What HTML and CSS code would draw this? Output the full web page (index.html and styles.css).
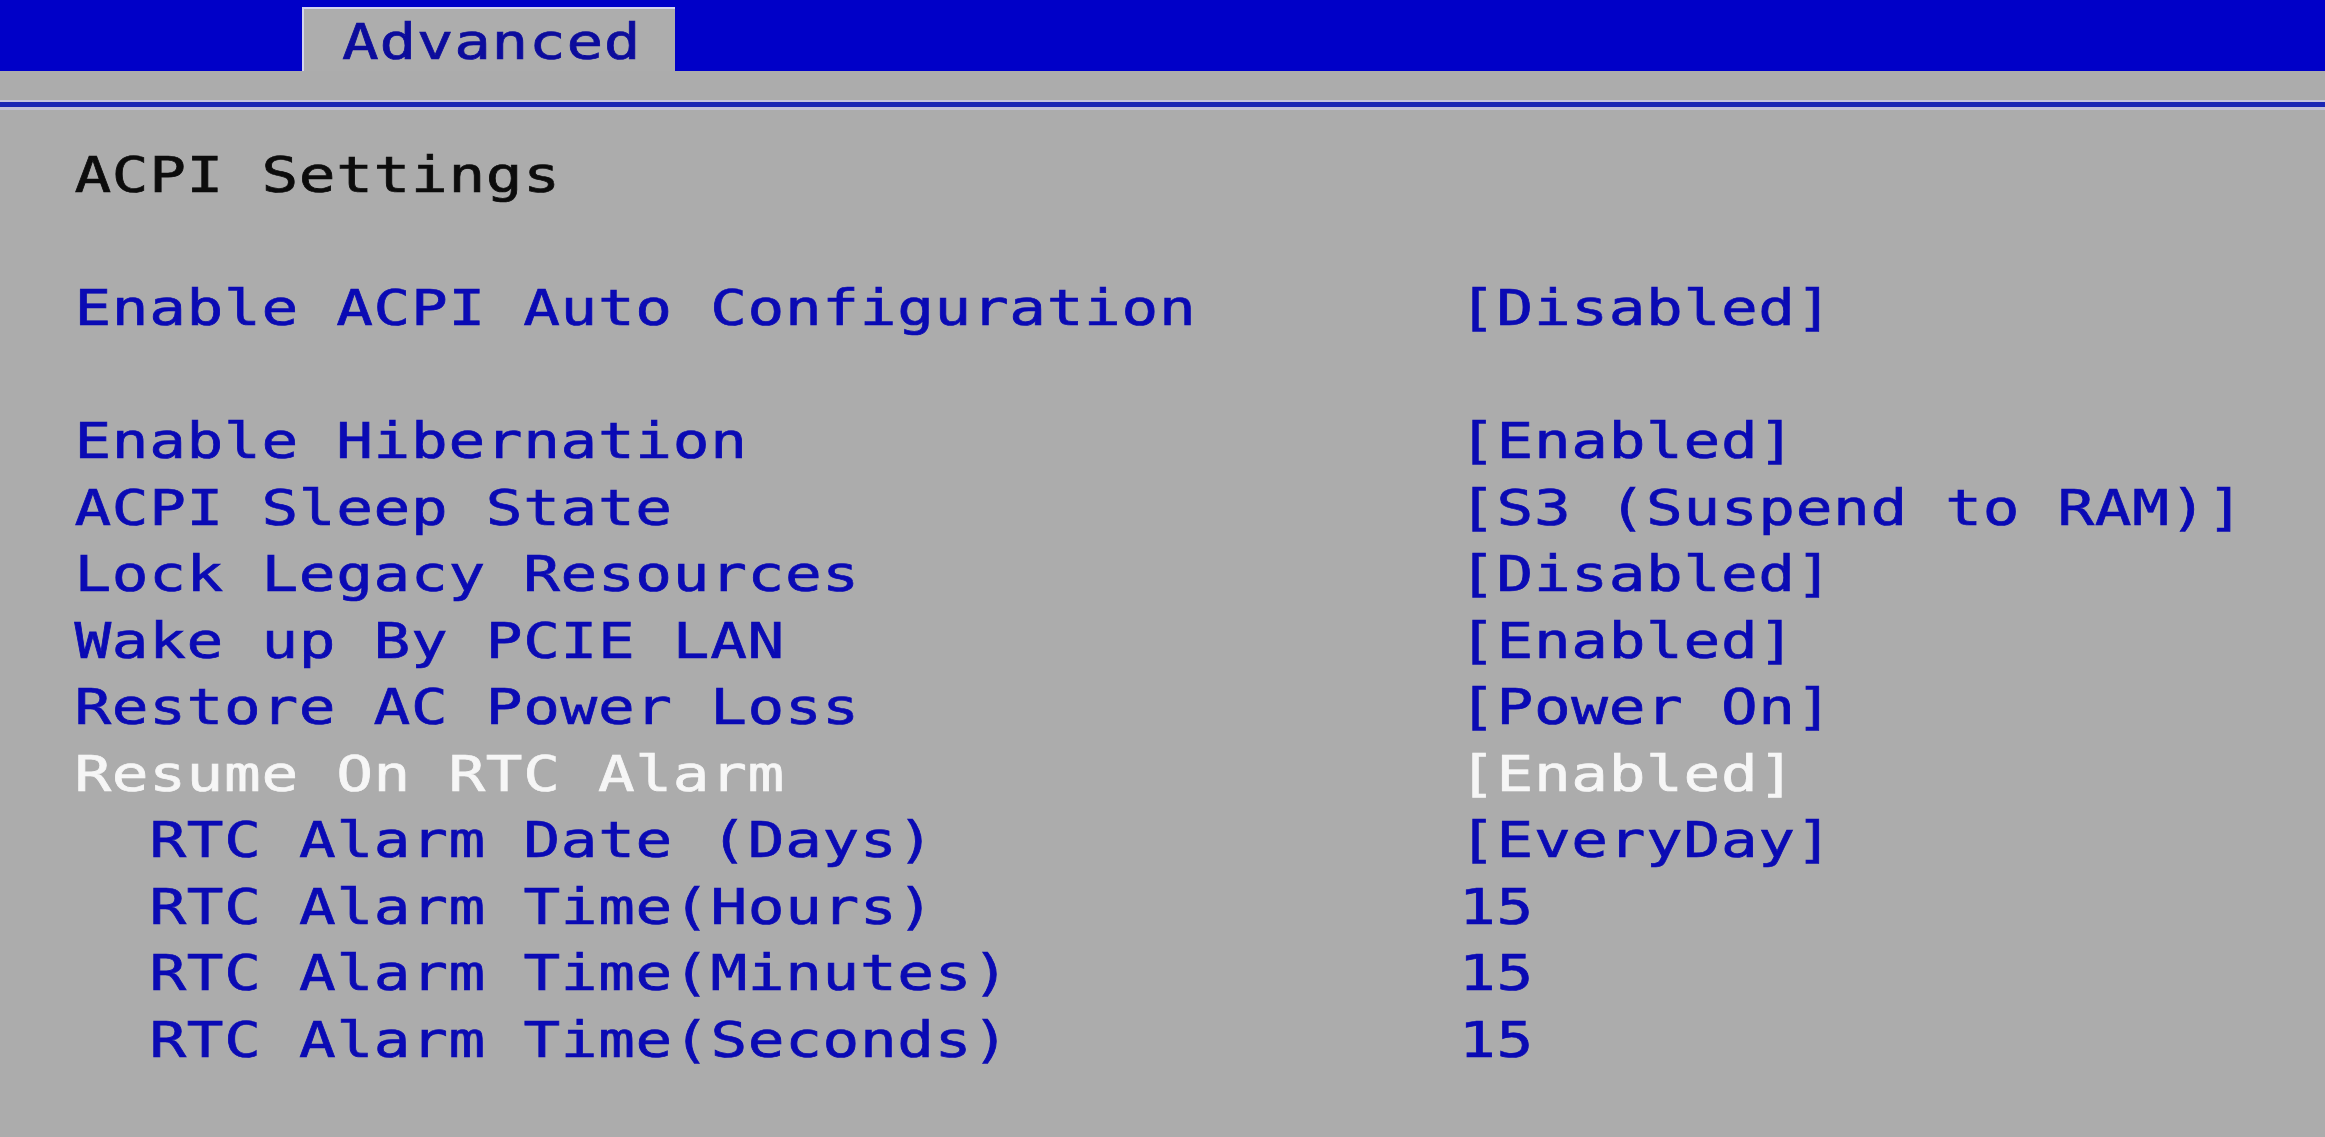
FILE: index.html
```html
<!DOCTYPE html>
<html>
<head>
<meta charset="utf-8">
<link rel="stylesheet" href="styles.css">
</head>
<body>
<div class="screen">
  <div class="topbar">
    <div class="tab"><span class="tab-text">Advanced</span></div>
  </div>
  <div class="band"></div>
  <div class="rule"></div>
  <div class="content">
    <div class="row title">ACPI Settings</div>
    <div class="row blank"></div>
    <div class="row"><span class="label">Enable ACPI Auto Configuration</span><span class="value">[Disabled]</span></div>
    <div class="row blank"></div>
    <div class="row"><span class="label">Enable Hibernation</span><span class="value">[Enabled]</span></div>
    <div class="row"><span class="label">ACPI Sleep State</span><span class="value">[S3 (Suspend to RAM)]</span></div>
    <div class="row"><span class="label">Lock Legacy Resources</span><span class="value">[Disabled]</span></div>
    <div class="row"><span class="label">Wake up By PCIE LAN</span><span class="value">[Enabled]</span></div>
    <div class="row"><span class="label">Restore AC Power Loss</span><span class="value">[Power On]</span></div>
    <div class="row selected"><span class="label">Resume On RTC Alarm</span><span class="value">[Enabled]</span></div>
    <div class="row sub"><span class="label">RTC Alarm Date (Days)</span><span class="value">[EveryDay]</span></div>
    <div class="row sub"><span class="label">RTC Alarm Time(Hours)</span><span class="value">15</span></div>
    <div class="row sub"><span class="label">RTC Alarm Time(Minutes)</span><span class="value">15</span></div>
    <div class="row sub"><span class="label">RTC Alarm Time(Seconds)</span><span class="value">15</span></div>
  </div>
</div>
</body>
</html>
```
FILE: styles.css
```css
html, body {
  margin: 0;
  padding: 0;
  background: #acacac;
}
.screen {
  width: 2325px;
  height: 1137px;
  overflow: hidden;
  background: #acacac;
  font-family: "DejaVu Sans Mono", "Liberation Mono", monospace;
  font-size: 50px;
  letter-spacing: 0.55px;
  -webkit-text-stroke: 0.7px currentColor;
}
.topbar {
  height: 71px;
  background: #0000c8;
  padding-left: 302px;
  padding-top: 7px;
  box-sizing: border-box;
  display: flex;
  align-items: flex-end;
}
.tab {
  width: 373px;
  height: 64px;
  box-sizing: border-box;
  background: #adadad;
  border-left: 2px solid #d4d4ee;
  border-top: 2px solid #d4d4ee;
  padding-left: 38px;
  padding-top: 4px;
  line-height: 58px;
  color: #0c0c9c;
  white-space: nowrap;
}
.tab-text {
  display: inline-block;
  transform: scaleX(1.22);
  transform-origin: 0 0;
}
.band {
  height: 29px;
}
.rule {
  height: 5px;
  background: #1a26b4;
  border-top: 2px solid #c4c4dc;
  border-bottom: 3px solid #c0c0d6;
}
.content {
  padding-top: 32px;
  padding-left: 61px;
  transform: scaleX(1.22);
  transform-origin: 0 0;
}
.row {
  height: 66.5px;
  line-height: 66.5px;
  display: flex;
  color: #0a0ab4;
  white-space: nowrap;
}
.row.title {
  color: #0c0c0c;
}
.row.selected {
  color: #f6f6f6;
}
.label {
  width: 1135px;
  flex: none;
}
.row.sub .label {
  padding-left: 61.5px;
  width: 1073.5px;
}
.value {
  flex: none;
}
```
